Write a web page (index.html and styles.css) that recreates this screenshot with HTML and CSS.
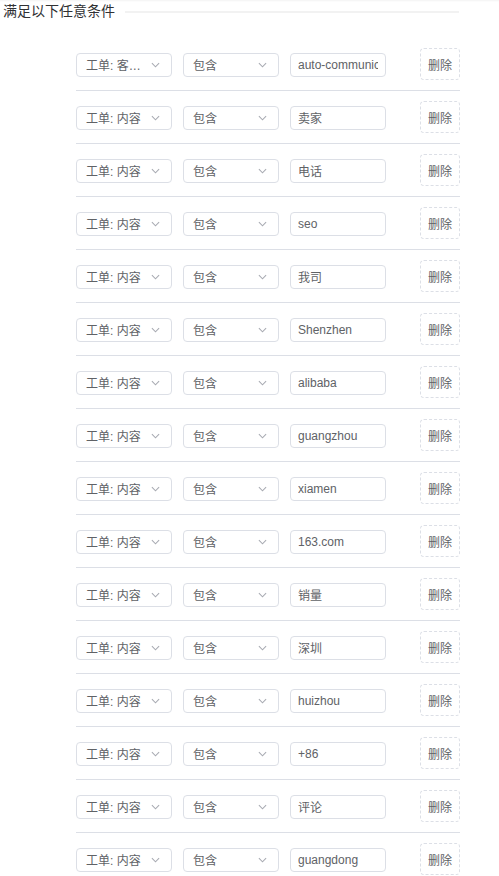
FILE: index.html
```html
<!DOCTYPE html>
<html lang="zh-CN">
<head>
<meta charset="utf-8">
<link rel="stylesheet" href="styles.css">
</head>
<body>
<div class="page">
  <div class="legend">
    <span class="legend-title">满足以下任意条件</span>
    <span class="legend-line"></span>
  </div>
  <div class="rules">
    <div class="rule"><div class="sel sel-field"><span class="sel-text">工单: 客户邮箱</span><svg class="chev" viewBox="0 0 10 6"><polyline points="1,1 5,5 9,1"/></svg></div><div class="sel sel-op"><span class="sel-text">包含</span><svg class="chev" viewBox="0 0 10 6"><polyline points="1,1 5,5 9,1"/></svg></div><input class="val" value="auto-communication"><button class="del">删除</button></div>
    <div class="rule"><div class="sel sel-field"><span class="sel-text">工单: 内容</span><svg class="chev" viewBox="0 0 10 6"><polyline points="1,1 5,5 9,1"/></svg></div><div class="sel sel-op"><span class="sel-text">包含</span><svg class="chev" viewBox="0 0 10 6"><polyline points="1,1 5,5 9,1"/></svg></div><input class="val" value="卖家"><button class="del">删除</button></div>
    <div class="rule"><div class="sel sel-field"><span class="sel-text">工单: 内容</span><svg class="chev" viewBox="0 0 10 6"><polyline points="1,1 5,5 9,1"/></svg></div><div class="sel sel-op"><span class="sel-text">包含</span><svg class="chev" viewBox="0 0 10 6"><polyline points="1,1 5,5 9,1"/></svg></div><input class="val" value="电话"><button class="del">删除</button></div>
    <div class="rule"><div class="sel sel-field"><span class="sel-text">工单: 内容</span><svg class="chev" viewBox="0 0 10 6"><polyline points="1,1 5,5 9,1"/></svg></div><div class="sel sel-op"><span class="sel-text">包含</span><svg class="chev" viewBox="0 0 10 6"><polyline points="1,1 5,5 9,1"/></svg></div><input class="val" value="seo"><button class="del">删除</button></div>
    <div class="rule"><div class="sel sel-field"><span class="sel-text">工单: 内容</span><svg class="chev" viewBox="0 0 10 6"><polyline points="1,1 5,5 9,1"/></svg></div><div class="sel sel-op"><span class="sel-text">包含</span><svg class="chev" viewBox="0 0 10 6"><polyline points="1,1 5,5 9,1"/></svg></div><input class="val" value="我司"><button class="del">删除</button></div>
    <div class="rule"><div class="sel sel-field"><span class="sel-text">工单: 内容</span><svg class="chev" viewBox="0 0 10 6"><polyline points="1,1 5,5 9,1"/></svg></div><div class="sel sel-op"><span class="sel-text">包含</span><svg class="chev" viewBox="0 0 10 6"><polyline points="1,1 5,5 9,1"/></svg></div><input class="val" value="Shenzhen"><button class="del">删除</button></div>
    <div class="rule"><div class="sel sel-field"><span class="sel-text">工单: 内容</span><svg class="chev" viewBox="0 0 10 6"><polyline points="1,1 5,5 9,1"/></svg></div><div class="sel sel-op"><span class="sel-text">包含</span><svg class="chev" viewBox="0 0 10 6"><polyline points="1,1 5,5 9,1"/></svg></div><input class="val" value="alibaba"><button class="del">删除</button></div>
    <div class="rule"><div class="sel sel-field"><span class="sel-text">工单: 内容</span><svg class="chev" viewBox="0 0 10 6"><polyline points="1,1 5,5 9,1"/></svg></div><div class="sel sel-op"><span class="sel-text">包含</span><svg class="chev" viewBox="0 0 10 6"><polyline points="1,1 5,5 9,1"/></svg></div><input class="val" value="guangzhou"><button class="del">删除</button></div>
    <div class="rule"><div class="sel sel-field"><span class="sel-text">工单: 内容</span><svg class="chev" viewBox="0 0 10 6"><polyline points="1,1 5,5 9,1"/></svg></div><div class="sel sel-op"><span class="sel-text">包含</span><svg class="chev" viewBox="0 0 10 6"><polyline points="1,1 5,5 9,1"/></svg></div><input class="val" value="xiamen"><button class="del">删除</button></div>
    <div class="rule"><div class="sel sel-field"><span class="sel-text">工单: 内容</span><svg class="chev" viewBox="0 0 10 6"><polyline points="1,1 5,5 9,1"/></svg></div><div class="sel sel-op"><span class="sel-text">包含</span><svg class="chev" viewBox="0 0 10 6"><polyline points="1,1 5,5 9,1"/></svg></div><input class="val" value="163.com"><button class="del">删除</button></div>
    <div class="rule"><div class="sel sel-field"><span class="sel-text">工单: 内容</span><svg class="chev" viewBox="0 0 10 6"><polyline points="1,1 5,5 9,1"/></svg></div><div class="sel sel-op"><span class="sel-text">包含</span><svg class="chev" viewBox="0 0 10 6"><polyline points="1,1 5,5 9,1"/></svg></div><input class="val" value="销量"><button class="del">删除</button></div>
    <div class="rule"><div class="sel sel-field"><span class="sel-text">工单: 内容</span><svg class="chev" viewBox="0 0 10 6"><polyline points="1,1 5,5 9,1"/></svg></div><div class="sel sel-op"><span class="sel-text">包含</span><svg class="chev" viewBox="0 0 10 6"><polyline points="1,1 5,5 9,1"/></svg></div><input class="val" value="深圳"><button class="del">删除</button></div>
    <div class="rule"><div class="sel sel-field"><span class="sel-text">工单: 内容</span><svg class="chev" viewBox="0 0 10 6"><polyline points="1,1 5,5 9,1"/></svg></div><div class="sel sel-op"><span class="sel-text">包含</span><svg class="chev" viewBox="0 0 10 6"><polyline points="1,1 5,5 9,1"/></svg></div><input class="val" value="huizhou"><button class="del">删除</button></div>
    <div class="rule"><div class="sel sel-field"><span class="sel-text">工单: 内容</span><svg class="chev" viewBox="0 0 10 6"><polyline points="1,1 5,5 9,1"/></svg></div><div class="sel sel-op"><span class="sel-text">包含</span><svg class="chev" viewBox="0 0 10 6"><polyline points="1,1 5,5 9,1"/></svg></div><input class="val" value="+86"><button class="del">删除</button></div>
    <div class="rule"><div class="sel sel-field"><span class="sel-text">工单: 内容</span><svg class="chev" viewBox="0 0 10 6"><polyline points="1,1 5,5 9,1"/></svg></div><div class="sel sel-op"><span class="sel-text">包含</span><svg class="chev" viewBox="0 0 10 6"><polyline points="1,1 5,5 9,1"/></svg></div><input class="val" value="评论"><button class="del">删除</button></div>
    <div class="rule"><div class="sel sel-field"><span class="sel-text">工单: 内容</span><svg class="chev" viewBox="0 0 10 6"><polyline points="1,1 5,5 9,1"/></svg></div><div class="sel sel-op"><span class="sel-text">包含</span><svg class="chev" viewBox="0 0 10 6"><polyline points="1,1 5,5 9,1"/></svg></div><input class="val" value="guangdong"><button class="del">删除</button></div>
  </div>
</div>
</body>
</html>
```

FILE: styles.css
```css
html, body {
  margin: 0;
  padding: 0;
  background: #ffffff;
}
body {
  font-family: "Liberation Sans", "Noto Sans CJK SC", Arial, sans-serif;
  color: #606266;
  overflow: hidden;
}
.page {
  box-shadow: inset 0 2px 2px -1px rgba(0, 0, 0, 0.05);
  padding-top: 1px;
  height: 876px;
  box-sizing: border-box;
}
.legend {
  display: flex;
  align-items: center;
  padding-left: 3px;
  width: 456px;
  height: 20px;
}
.legend-title {
  font-size: 14px;
  line-height: 20px;
  color: #303133;
  white-space: nowrap;
}
.legend-line {
  flex: 1;
  height: 2px;
  margin-left: 10px;
  background: #f2f2f2;
  margin-top: 1px;
}
.rules {
  margin-left: 76px;
  width: 384px;
  margin-top: 17px;
}
.rule {
  display: flex;
  align-items: center;
  padding: 10px 0;
  border-bottom: 1px solid #dcdfe6;
  height: 32px;
}
.sel {
  width: 96px;
  height: 24px;
  box-sizing: border-box;
  border: 1px solid #dcdfe6;
  border-radius: 4px;
  display: flex;
  align-items: center;
  padding-left: 9px;
  padding-right: 11px;
  margin-right: 11px;
  margin-top: 1px;
}
.sel-text {
  min-width: 0;
  font-size: 12px;
  color: #606266;
  white-space: nowrap;
  overflow: hidden;
  text-overflow: ellipsis;
}
.sel-field .sel-text {
  max-width: 56px;
}
.chev {
  width: 9px;
  height: 6px;
  margin-left: auto;
  fill: none;
  stroke: #a8abb2;
  stroke-width: 1.2;
  flex: none;
}
.val {
  width: 96px;
  height: 24px;
  box-sizing: border-box;
  border: 1px solid #dcdfe6;
  border-radius: 4px;
  padding: 0 7px;
  font-family: "Liberation Sans", "Noto Sans CJK SC", Arial, sans-serif;
  font-size: 12px;
  color: #606266;
  background: #fff;
  outline: none;
  margin: 1px 0 0 0;
}
.del {
  margin-left: auto;
  width: 40px;
  height: 32px;
  box-sizing: border-box;
  border: 1px dashed #dcdfe6;
  border-radius: 4px;
  background: #fff;
  padding: 0;
  font-family: "Liberation Sans", "Noto Sans CJK SC", Arial, sans-serif;
  font-size: 12px;
  color: #606266;
}
```
